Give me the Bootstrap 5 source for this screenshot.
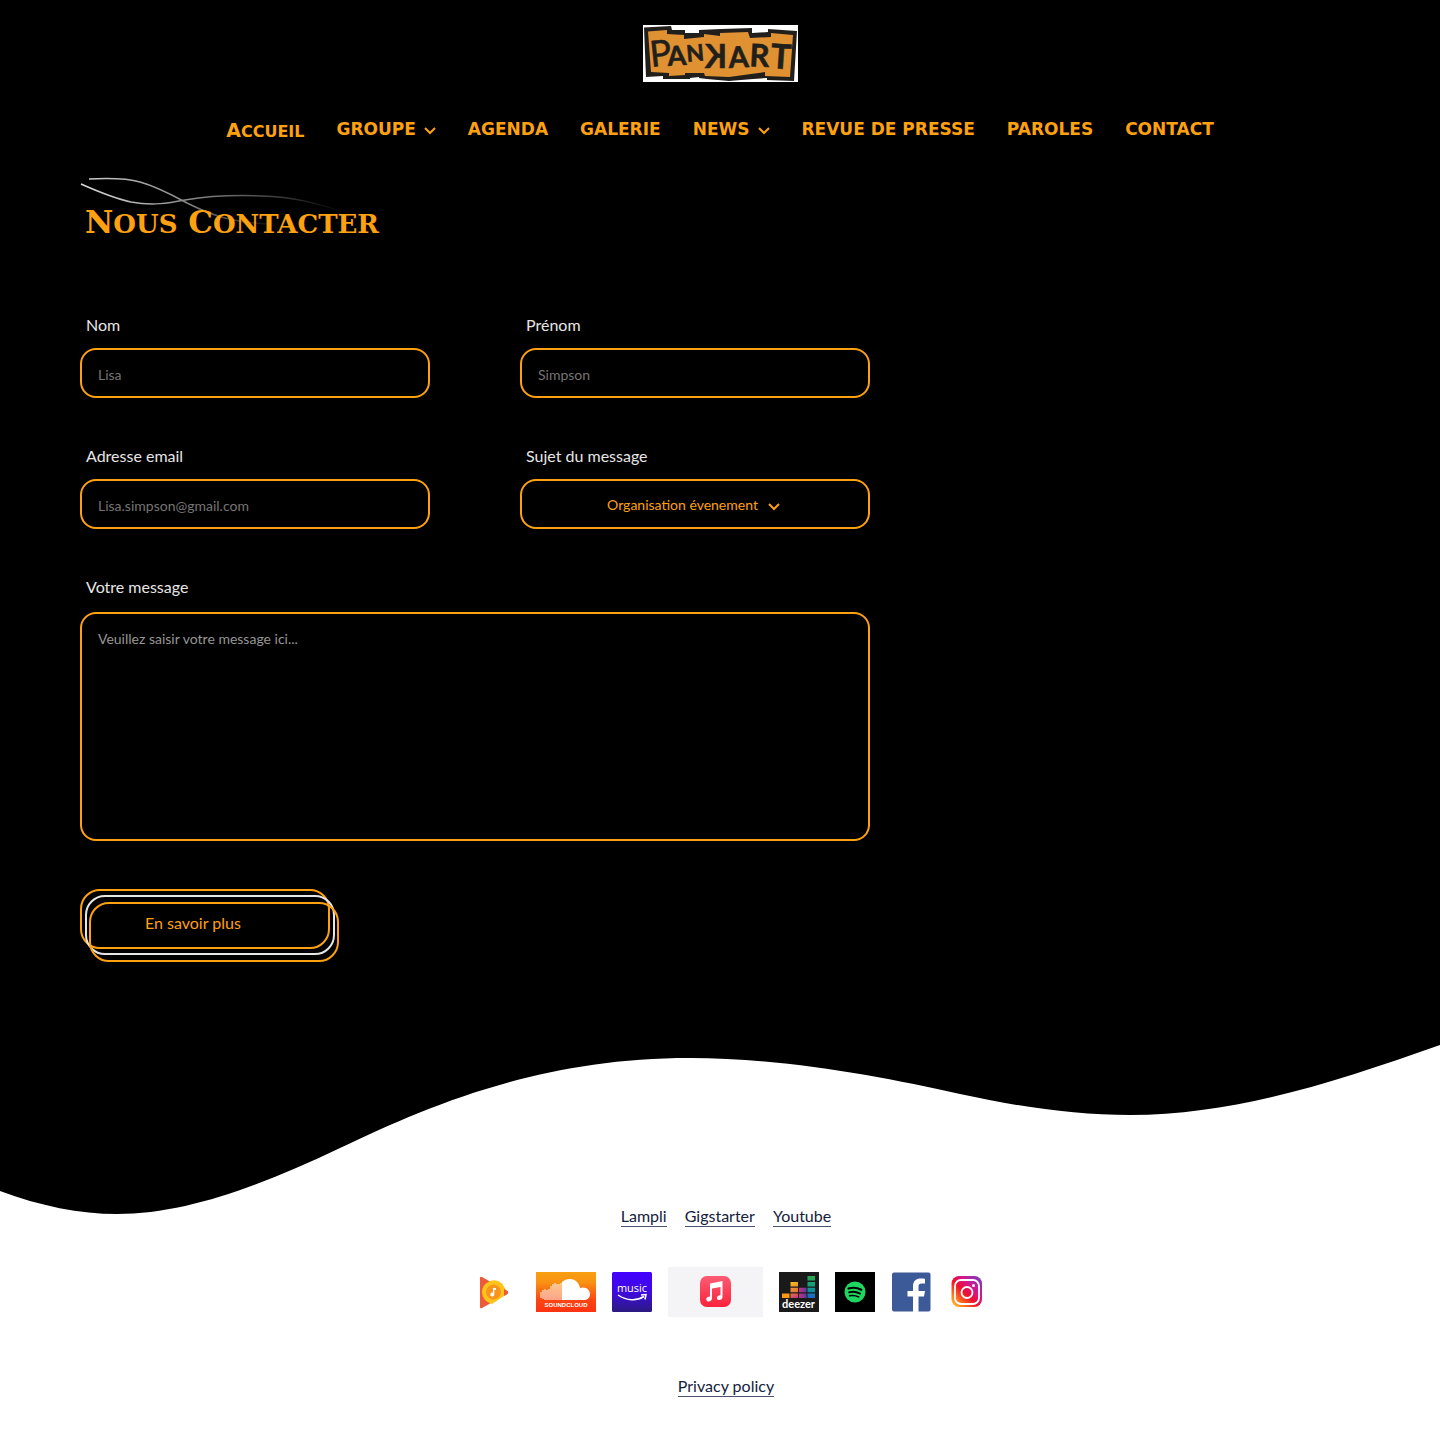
<!DOCTYPE html>
<html lang="fr">
<head>
<meta charset="utf-8">
<meta name="viewport" content="width=device-width, initial-scale=1">
<title>Pankart – Nous contacter</title>
<link href="https://cdn.jsdelivr.net/npm/bootstrap@5.3.0/dist/css/bootstrap.min.css" rel="stylesheet">
<style>
  :root { --pk-orange: #fea110; --pk-light: #e6e6e6; --pk-navy: #14213d; }
  body { background: #000; color: var(--pk-light); font-family: Lato, "Open Sans", sans-serif; font-size: 16px; line-height: 24px; }
  .pk-display { font-family: "DejaVu Serif", serif; font-weight: 700; color: var(--pk-orange); }
  .site-logo { width: 155px; height: 57px; }
  .site-header { padding-top: 25px; }
  .main-menu { margin-top: 35px; gap: 32px; font-family: "DejaVu Sans", sans-serif; }
  .main-menu a { font-size: 17px; line-height: 24px; color: var(--pk-orange); text-decoration: none; white-space: nowrap; }
  .main-menu a.home { font-size: 19px; padding-top: 1px; }
  .home span { font-size: 16px; }
  .chevron { width: 12px; height: 8px; margin-left: 8px; margin-top: 4px; fill: none; stroke: var(--pk-orange); stroke-width: 2; }
  .page-main { padding-left: 80px; padding-right: 80px; padding-top: 60px; }
  .page-title { font-size: 31px; line-height: 36px; margin: 0; padding-left: 5px; }
  .page-title span { font-size: 26px; }
  .swoosh { position: absolute; left: 0; top: -28px; width: 270px; height: 52px; }
  .contact-form { max-width: 790px; margin-top: 71px; }
  .form-grid { column-gap: 90px; row-gap: 46px; display: grid; grid-template-columns: 1fr 1fr; }
  .contact-form label { display: block; padding-left: 6px; margin-bottom: 11px; }
  .message-group { margin-top: 46px; }
  .contact-form .message-group label { margin-bottom: 13px; }
  .field { background: transparent; border: 2px solid var(--pk-orange); border-radius: 16px; height: 50px; padding: 2px 16px 0; font-size: 14px; line-height: 20px; color: var(--pk-light); }
  .field:focus { background: transparent; color: var(--pk-light); border-color: var(--pk-orange); box-shadow: 0 0 0 3px #fea11055; }
  .field::placeholder { color: #757575; opacity: 1; }
  textarea.field { height: 229px; padding-top: 15px; resize: none; }
  textarea.field::placeholder { color: #969696; }
  select.field { width: 100%; appearance: none; color: var(--pk-orange); text-align-last: center; padding: 2px 41px 0 16px; }
  .select-arrow { position: absolute; right: 90px; top: 20px; pointer-events: none; margin: 4px 0 0; }
  .btn-stack { position: relative; width: 250px; height: 60px; margin-top: 48px; padding: 8px 0 0 63px; text-align: left; background: transparent; border: 2px solid var(--pk-orange); border-radius: 20px; color: var(--pk-orange); font-size: 16px; line-height: 24px; }
  .btn-stack span { display: block; }
  .btn-stack::before, .btn-stack::after { content: ""; position: absolute; width: 250px; height: 60px; border-radius: 20px; border: 2px solid var(--pk-light); left: 3px; top: 4px; }
  .btn-stack::after { border-color: var(--pk-orange); left: 7px; top: 11px; }
  .site-footer { margin-top: 97px; padding: 159px 0 46px 12px; }
  .wave { position: absolute; left: 0; top: 0; width: 100%; height: 100%; }
  .wave svg { display: block; width: 100%; height: 170px; overflow: visible; }
  .wave div { background: #fff; height: calc(100% - 169px); margin-top: -1px; }
  .foot-link { color: var(--pk-navy); text-decoration: none; border-bottom: 1px solid #4a5470; line-height: 21px; }
  .foot-links { gap: 18px; }
  .social { gap: 16px; margin-top: 40px; margin-bottom: 58px; }
  .social a, .social svg { display: block; }
</style>
</head>
<body>
<header class="site-header d-flex flex-column align-items-center">
  <a href="#" aria-label="Pankart">
    <svg class="site-logo d-block" viewBox="0 0 155 57">
      <path fill="#fff" d="M0 0h155v57H0z"/>
      <path fill="#211f1c" d="M1 2.500 28 1l1 4h13v3h14V5l22-1 31-1v5l16-1V4l29 2-3 50-27-1v-2l-14 1-24 2-22-2-8-1v-1l-9 1v1H20v-3L3 52z"/>
      <path fill="#e09132" d="M5 6.500 24 5v4l17 1v4l20-2V9l16 2V8l28-1 2 6 21-1V8l22 2-3 42-25-1v-4l-14 2-22 3-24-1-1-3-19 0v2l-16 1v-3l-18-1z"/>
      <g fill="#211f1c" stroke="#211f1c" stroke-width=".6" font-family="Lato, sans-serif" font-weight="700">
        <text font-size="36" transform="translate(8 42) rotate(-6)" font-weight="400">P</text>
        <text font-size="27" transform="translate(25 41) rotate(-4)">A</text>
        <text font-size="23" transform="translate(44 37) rotate(-5)">N</text>
        <text font-size="32" transform="translate(84 43) scale(-1 1)">K</text>
        <text font-size="29" transform="translate(86 43) rotate(-3)">A</text>
        <text font-size="31" transform="translate(106 41) rotate(3)">R</text>
        <text font-size="34" transform="translate(127 43) rotate(4)">T</text>
      </g>
    </svg>
  </a>
  <nav class="main-menu pk-display d-flex flex-wrap justify-content-center align-items-start" aria-label="Menu principal">
    <a class="home" href="#">A<span>CCUEIL</span></a>
    <a class="d-flex align-items-center" href="#">GROUPE<svg class="chevron" viewBox="0 0 12 8"><path d="m1 1 5 5 5-5"/></svg></a>
    <a href="#">AGENDA</a>
    <a href="#">GALERIE</a>
    <a class="d-flex align-items-center" href="#">NEWS<svg class="chevron" viewBox="0 0 12 8"><path d="m1 1 5 5 5-5"/></svg></a>
    <a href="#">REVUE DE PRESSE</a>
    <a href="#">PAROLES</a>
    <a href="#">CONTACT</a>
  </nav>
</header>

<main class="page-main">
  <div class="position-relative">
    <svg class="swoosh" viewBox="0 0 270 52" fill="none" stroke-width="1.500" aria-hidden="true">
      <defs>
        <linearGradient id="fadeA" gradientUnits="userSpaceOnUse" x1="0" y1="0" x2="265" y2="0"><stop stop-color="#ddd"/><stop offset=".5" stop-color="#777"/><stop offset="1" stop-color="#000"/></linearGradient>
        <linearGradient id="fadeB" gradientUnits="userSpaceOnUse" x1="8" y1="0" x2="200" y2="0"><stop stop-color="#ccc"/><stop offset=".5" stop-color="#888"/><stop offset="1" stop-color="#000"/></linearGradient>
      </defs>
      <path stroke="url(#fadeA)" d="M1 8c18 8 36 15 50 18 22 4 38 1 54-2 24-4 52-5 76-4 34 1 54 7 80 15"/>
      <path stroke="url(#fadeB)" d="M9 3c20-1 37-1 51 3 18 5 32 13 47 21 22 11 48 22 94 21"/>
    </svg>
    <h1 class="page-title pk-display position-relative">N<span>OUS</span> C<span>ONTACTER</span></h1>
  </div>

  <form class="contact-form">
    <div class="form-grid">
      <div><label for="nom">Nom</label><input class="form-control field" id="nom" type="text" placeholder="Lisa"></div>
      <div><label for="prenom">Prénom</label><input class="form-control field" id="prenom" type="text" placeholder="Simpson"></div>
      <div><label for="email">Adresse email</label><input class="form-control field" id="email" type="email" placeholder="Lisa.simpson@gmail.com"></div>
      <div>
        <label for="sujet">Sujet du message</label>
        <div class="position-relative">
          <select class="field" id="sujet"><option>Organisation évenement</option></select>
          <svg class="chevron select-arrow" viewBox="0 0 12 8"><path d="m1 1 5 5 5-5"/></svg>
        </div>
      </div>
    </div>
    <div class="message-group">
      <label for="message">Votre message</label>
      <textarea class="form-control field" id="message" placeholder="Veuillez saisir votre message ici..."></textarea>
    </div>
    <button class="btn-stack d-block" type="submit"><span>En savoir plus</span></button>
  </form>
</main>

<footer class="site-footer position-relative">
  <div class="wave" aria-hidden="true">
    <svg viewBox="0 0 1440 170" preserveAspectRatio="none"><path fill="#fff" d="M0 145C40 160 80 168 117 168C187 168 262 139 340 102C430 59 540 12 690 12C780 12 880 30 960 48C1020 61 1075 69 1130 69C1235 69 1335 36 1440-1V170H0z"/></svg>
    <div></div>
  </div>
  <div class="position-relative d-flex flex-column align-items-center">
    <div class="foot-links d-flex">
      <a class="foot-link" href="#">Lampli</a><a class="foot-link" href="#">Gigstarter</a><a class="foot-link" href="#">Youtube</a>
    </div>
    <div class="social d-flex flex-wrap justify-content-center align-items-center">
      <a href="#" aria-label="Google Play Musique"><svg width="55" height="40" viewBox="0 0 55 40">
        <path fill="#ec5a37" d="M15 6q0-2 2-1l25 14q2 1 0 3L17 36q-2 1-2-1z"/>
        <path fill="#fdc51b" d="M17 20a12 12 0 0 1 20-8.500L41 18l-2 6-12 8a12 12 0 0 1-10-12z"/>
        <path fill="#ec5a37" d="m39 17 3.500 2q1.500 1.500 0 3L39 24z"/>
        <circle cx="28.500" cy="20" r="7.500" fill="#f8951c"/>
        <path fill="#fff" d="M28 16h3v2h-1.700v4.500a2 2 0 1 1-1.300-1.900z"/>
      </svg></a>
      <a href="#" aria-label="SoundCloud"><svg width="60" height="40" viewBox="0 0 60 40">
        <defs><linearGradient id="sc" x2="0" y2="1"><stop stop-color="#f99f12"/><stop offset=".25" stop-color="#f99312"/><stop offset=".7" stop-color="#fb4612"/><stop offset="1" stop-color="#fb3311"/></linearGradient></defs>
        <path fill="url(#sc)" d="M0 0h60v40H0z"/>
        <path fill="#fff" d="M26 28V10c6-5 16-4 18 6 6-2 10 2 10 6s-3 6-6 6z"/>
        <path stroke="#fff" stroke-width="1.200" opacity=".85" d="M5 20v6M7 18v9M9 17v11M11 18v10M13 17v11M15 14v14M17 12v16M19 11v17M21 12v16M23 12v16M25 11v17"/>
        <text x="30" y="35" text-anchor="middle" fill="#fff" font-family="'Liberation Sans', sans-serif" font-size="6" font-weight="700">SOUNDCLOUD</text>
      </svg></a>
      <a href="#" aria-label="Amazon Music"><svg width="40" height="40" viewBox="0 0 40 40">
        <defs><linearGradient id="am" x2="0" y2="1"><stop stop-color="#4301ff"/><stop offset=".5" stop-color="#3f0be0"/><stop offset="1" stop-color="#2b1a80"/></linearGradient></defs>
        <rect width="40" height="40" rx="1.500" fill="url(#am)"/>
        <text x="20" y="20" text-anchor="middle" fill="#fff" font-family="'Open Sans', sans-serif" font-size="11">music</text>
        <path d="M6 23c9 6 19 6 26 1.500M29 23l5-.5-1 5" fill="none" stroke="#fff" stroke-width="1.500"/>
      </svg></a>
      <a href="#" aria-label="Apple Music"><svg width="95" height="50" viewBox="0 0 95 50">
        <defs><linearGradient id="ap" x2="0" y2="1"><stop stop-color="#fb5c74"/><stop offset="1" stop-color="#fa233b"/></linearGradient></defs>
        <path fill="#f4f4f7" d="M0 0h95v50H0z"/>
        <rect x="32" y="9" width="31" height="31" rx="7" fill="url(#ap)"/>
        <path fill="#fff" d="m42 16.500 12.500-2.500v16c0 2-1.500 3-3.500 3s-3-2.500-1-4c1-.8 2.500-1 2.500-1v-8L44 21.500V31c0 2-1.500 3.500-3.500 3.500s-3-2.500-1.500-4c1-1 3-1 3-1z"/>
      </svg></a>
      <a href="#" aria-label="Deezer"><svg width="40" height="40" viewBox="0 0 40 40">
        <defs><linearGradient id="dz1" gradientUnits="userSpaceOnUse" x1="12" y1="10" x2="19" y2="26"><stop stop-color="#f5c01c"/><stop offset=".6" stop-color="#e5753c"/><stop offset="1" stop-color="#b8348a"/></linearGradient>
        <linearGradient id="dz2" x2="1"><stop stop-color="#c8307c"/><stop offset="1" stop-color="#5c3a9e"/></linearGradient>
        <linearGradient id="dz3" x2="0" y2="1"><stop stop-color="#2fa64b"/><stop offset=".5" stop-color="#07a287"/><stop offset="1" stop-color="#1e62d0"/></linearGradient></defs>
        <path fill="#1a1a1a" d="M0 0h40v40H0z"/>
        <path fill="#f99a15" d="M3 21.500h7.500v4.500H3z"/>
        <path fill="url(#dz1)" d="M11.500 10H19v4.500h-7.500zm0 5.800H19v4.500h-7.500zm0 5.700H19V26h-7.500z"/>
        <path fill="url(#dz2)" d="M20 15.800h7.500v4.500H20zm0 5.700h7.500V26H20z"/>
        <path fill="url(#dz3)" d="M28.500 4H36v4.500h-7.500zm0 6H36v4.500h-7.500zm0 5.800H36v4.500h-7.500zm0 5.700H36V26h-7.500z"/>
        <text x="19.500" y="36" text-anchor="middle" fill="#fff" font-family="Lato, sans-serif" font-size="11" font-weight="700">deezer</text>
      </svg></a>
      <a href="#" aria-label="Spotify"><svg width="40" height="40" viewBox="0 0 40 40">
        <path d="M0 0h40v40H0z"/><circle cx="20" cy="20" r="10.500" fill="#1ed760"/>
        <g fill="none" stroke="#000" stroke-linecap="round"><path stroke-width="2.200" d="M13.500 16.500c4-1.200 9-.8 12.800 1.300"/><path stroke-width="1.800" d="M14 20.300c3.600-1 7.600-.6 11 1.300"/><path stroke-width="1.500" d="M14.500 23.800c3-.7 6.400-.4 9.300 1.200"/></g>
      </svg></a>
      <a href="#" aria-label="Facebook"><svg width="40" height="40" viewBox="0 0 40 40">
        <rect x="1" y=".5" width="38.500" height="39" rx="2" fill="#3d5a98"/>
        <path fill="#fff" d="M22 40V24.500h-5.500v-5.500H22v-4.500c0-5.500 3-8 8-8 2 0 3.500 0 4 .3v4.700h-3c-2.800 0-3.500 1.200-3.500 3.200V19H34l-1 5.500h-5.500V40z"/>
      </svg></a>
      <a href="#" aria-label="Instagram"><svg width="40" height="40" viewBox="0 0 40 40">
        <defs><linearGradient id="ig1" x1="0" y1="1" x2="1" y2="0"><stop stop-color="#ffd33d"/><stop offset=".25" stop-color="#fb6a1d"/><stop offset=".45" stop-color="#f00f2c"/><stop offset=".65" stop-color="#d5168a"/><stop offset="1" stop-color="#6a41c8"/></linearGradient></defs>
        <rect x="4.500" y="4" width="30.500" height="31" rx="7.500" fill="url(#ig1)"/>
        <g fill="none" stroke="#fff" stroke-width="1.800"><rect x="8" y="8" width="24" height="24" rx="6"/><circle cx="20" cy="20.500" r="5.500"/></g>
        <circle cx="26.500" cy="13.500" r="1.500" fill="#fff"/>
      </svg></a>
    </div>
    <a class="foot-link" href="#">Privacy policy</a>
  </div>
</footer>
<script src="https://cdn.jsdelivr.net/npm/bootstrap@5.3.0/dist/js/bootstrap.bundle.min.js"></script>
</body>
</html>
